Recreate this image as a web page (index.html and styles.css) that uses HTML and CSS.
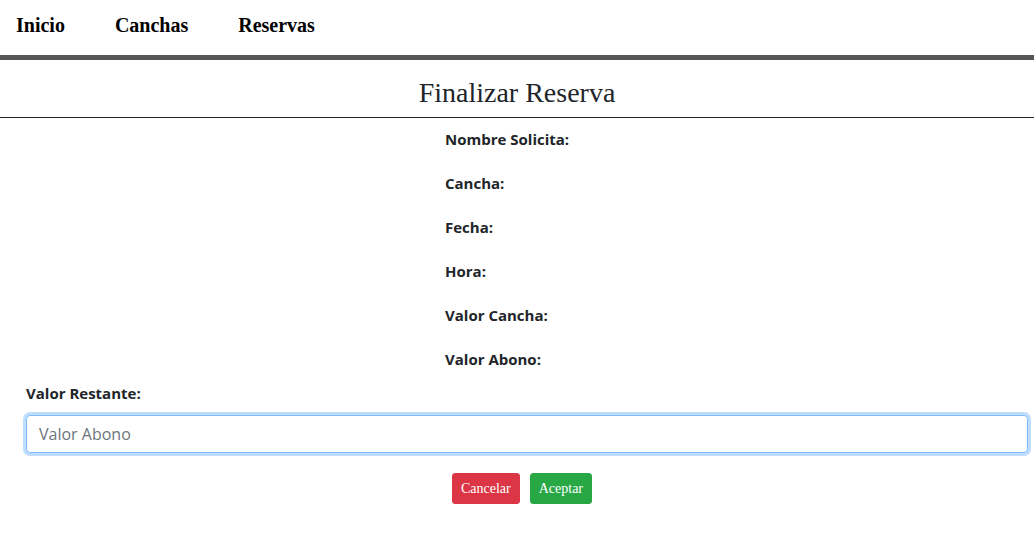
FILE: index.html
```html
<!DOCTYPE html>
<html lang="es">
<head>
<meta charset="utf-8">
<title>Finalizar Reserva</title>
<link rel="stylesheet" href="styles.css">
</head>
<body>
<nav class="nav">
  <a class="nav-link" href="#">Inicio</a>
  <a class="nav-link" href="#">Canchas</a>
  <a class="nav-link" href="#">Reservas</a>
</nav>
<h1 class="title">Finalizar Reserva</h1>
<div class="info">
  <p class="info-row">Nombre Solicita:</p>
  <p class="info-row">Cancha:</p>
  <p class="info-row">Fecha:</p>
  <p class="info-row">Hora:</p>
  <p class="info-row">Valor Cancha:</p>
  <p class="info-row">Valor Abono:</p>
</div>
<form class="form">
  <div class="field">
    <label class="form-label" for="abono">Valor Restante:</label>
    <input class="form-input" id="abono" type="text" placeholder="Valor Abono">
  </div>
  <div class="actions">
    <button class="btn btn-danger" type="button">Cancelar</button>
    <button class="btn btn-success" type="button">Aceptar</button>
  </div>
</form>
</body>
</html>
```
FILE: styles.css
```css
* { box-sizing: border-box; }
body {
  margin: 0;
  background: #fff;
  color: #212529;
  font-family: "Open Sans", "Noto Sans", sans-serif;
}
.nav {
  display: flex;
  gap: 50px;
  padding: 14px 16px 18px;
  border-bottom: 5px solid #555;
  font-family: "Liberation Serif", serif;
  font-weight: bold;
  font-size: 20px;
  line-height: 23px;
}
.nav-link {
  color: #000;
  text-decoration: none;
}
.title {
  margin: 0;
  padding: 16px 0 7px;
  border-bottom: 1px solid #212529;
  font-family: "Liberation Serif", serif;
  font-weight: normal;
  font-size: 28px;
  line-height: 34px;
  text-align: center;
  color: #212529;
}
.info {
  padding: 9px 0 0 445px;
}
.info-row {
  margin: 0 0 20px;
  font-weight: bold;
  font-size: 15px;
  line-height: 24px;
}
.field {
  padding: 0 6px 0 26px;
}
.form-label {
  display: block;
  margin: -10px 0 10px;
  font-weight: bold;
  font-size: 15px;
  line-height: 24px;
}
.form-input {
  display: block;
  width: 100%;
  height: 38px;
  padding: 6px 12px;
  border: 1px solid #80bdff;
  border-radius: 4px;
  box-shadow: 0 0 0 3px rgba(0, 123, 255, 0.25);
  outline: none;
  font-family: "Open Sans", "Noto Sans", sans-serif;
  font-size: 16px;
  color: #495057;
}
.form-input::placeholder {
  color: #6c757d;
}
.actions {
  display: flex;
  justify-content: center;
  margin-top: 20px;
}
.btn {
  margin-left: 10px;
  padding: 4px 8px;
  border: 1px solid transparent;
  border-radius: 3px;
  font-family: "Liberation Serif", serif;
  font-size: 14px;
  line-height: 21px;
  color: #fff;
  cursor: pointer;
}
.btn-danger { background: #dc3545; border-color: #dc3545; }
.btn-success { background: #28a745; border-color: #28a745; }
```
